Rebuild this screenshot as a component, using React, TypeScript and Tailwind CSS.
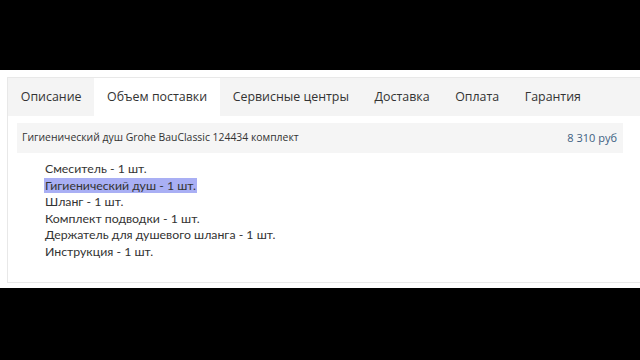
const tabs = ["Описание", "Объем поставки", "Сервисные центры", "Доставка", "Оплата", "Гарантия"]

const items = [
  "Смеситель - 1 шт.",
  "Гигиенический душ - 1 шт.",
  "Шланг - 1 шт.",
  "Комплект подводки - 1 шт.",
  "Держатель для душевого шланга - 1 шт.",
  "Инструкция - 1 шт.",
]

export default function App() {
  return (
    <div className="w-[640px] h-[360px] overflow-hidden bg-black flex flex-col font-['Open_Sans',sans-serif]">
      <div className="h-[70px] shrink-0" />
      <div className="h-[218px] shrink-0 bg-white pt-[7px] pl-[7px]">
        {/* card */}
        <div className="w-[645px] h-[206px] border border-[#e8e8e8] bg-white">
          {/* tabs */}
          <div className="flex h-[38px] bg-[#f4f4f4] text-[12.4px] text-[#333]">
            {tabs.map((t, i) => (
              <div
                key={t}
                className={
                  "flex items-center px-[12.8px] " + (i === 1 ? "bg-white" : "")
                }
              >
                {t}
              </div>
            ))}
          </div>

          <div className="pl-[9px] pt-[7px] w-[615px]">
            <div className="flex items-center justify-between h-[30px] bg-[#f5f5f5] pl-[5px] pr-[6px]">
              <span className="text-[10.4px] text-[#333]">
                Гигиенический душ Grohe BauClassic 124434 комплект
              </span>
              <span className="text-[11px] text-[#3d5f82]">8 310 руб</span>
            </div>

            <ul className="pl-[28px] pt-[8px] text-[12.3px] leading-[16.6px] text-[#333] font-['Lato',sans-serif]">
              {items.map((it, i) => (
                <li key={it}>
                  <span className={i === 1 ? "bg-[#a9aff4] px-[1px] -mx-[1px]" : ""}>{it}</span>
                </li>
              ))}
            </ul>
          </div>
        </div>
      </div>
      <div className="flex-1" />
    </div>
  )
}
